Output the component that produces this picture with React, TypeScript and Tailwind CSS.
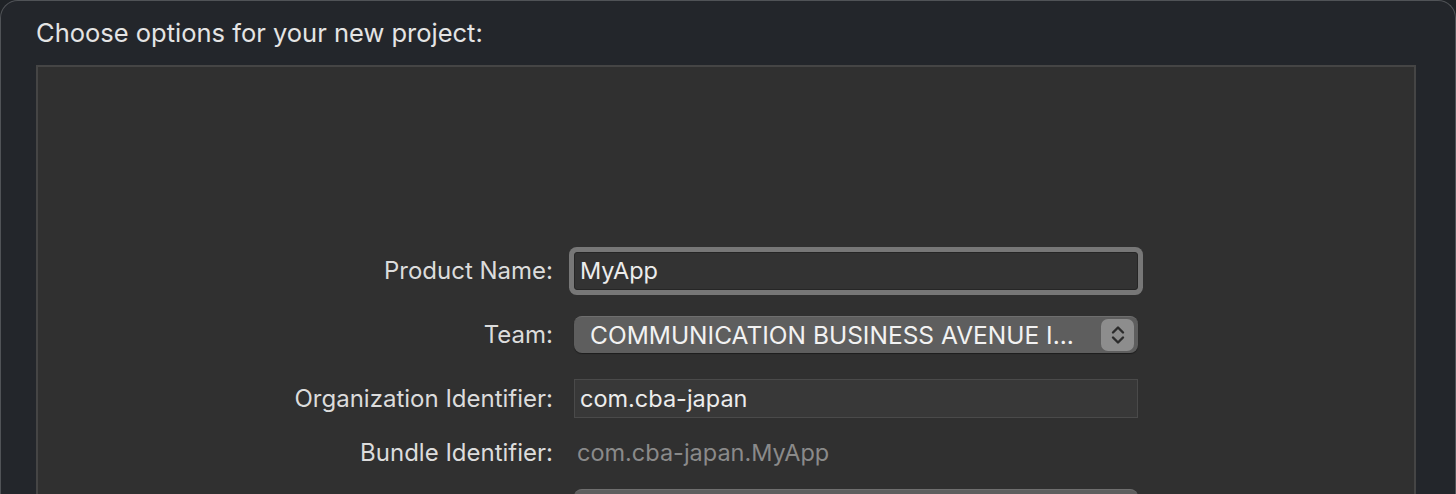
import { ReactNode } from "react";

const font = { fontFamily: "Inter, 'Noto Sans', sans-serif" };

function Row({ label, children, className }: { label: string; children: ReactNode; className?: string }) {
  return (
    <div className={`flex items-center ${className ?? ""}`}>
      <div className="w-[536px] shrink-0 pr-[21px] text-right text-[24px] text-[#dcdcdc]">{label}</div>
      <div className="w-[564px] shrink-0">{children}</div>
    </div>
  );
}

// up/down chevrons on the popup button
function Stepper() {
  return (
    <div className="flex h-[32px] w-[33px] items-center justify-center rounded-[7px] bg-[#8d8d8d]">
      <svg width="16" height="24" viewBox="0 0 16 24" fill="none" stroke="#2b2b2b" strokeWidth="2.4" strokeLinecap="round" strokeLinejoin="round">
        <path d="M3 9.5 8 4.5l5 5" />
        <path d="M3 14.5l5 5 5-5" />
      </svg>
    </div>
  );
}

export default function App() {
  return (
    <div className="h-[494px] w-[1456px] overflow-hidden bg-[#1f2226]" style={font}>
      <div className="h-[520px] rounded-t-[18px] border-x border-t border-[#505357] bg-[#23262b] pl-[35px] pr-[39px] pt-[16px]">
        <div className="text-[25.5px] leading-[32px] text-[#e4e4e4]">Choose options for your new project:</div>
        <div className="mt-[16px] h-[460px] border-2 border-[#454545] bg-[#303030] pt-[185px]">
          <Row label="Product Name:">
            <div className="flex h-[38px] items-center rounded-[3px] border border-[#262626] bg-[#333333] px-[5px] text-[23.5px] text-[#ececec] shadow-[0_0_0_5px_#777777]">
              MyApp
            </div>
          </Row>
          <Row label="Team:" className="mt-[26px]">
            <div className="flex h-[37px] items-center justify-between rounded-[8px] border-t border-[#6e6e6e] bg-[#5e5e5e] pl-[16px] pr-[4px] shadow-[0_1px_1px_rgba(0,0,0,0.4)]">
              <span className="text-[24.5px] text-[#f2f2f2]">COMMUNICATION BUSINESS AVENUE I...</span>
              <Stepper />
            </div>
          </Row>
          <Row label="Organization Identifier:" className="mt-[26px]">
            <div className="flex h-[39px] items-center border border-[#4a4a4a] bg-[#383838] px-[5px] text-[23.5px] text-[#ececec]">
              com.cba-japan
            </div>
          </Row>
          <Row label="Bundle Identifier:" className="mt-[16px]">
            <div className="flex h-[38px] items-center px-[3px] text-[23.5px] text-[#8a8a8a]">com.cba-japan.MyApp</div>
          </Row>
          <Row label="" className="mt-[17px]">
            <div className="h-[37px] rounded-[8px] border-t border-[#6e6e6e] bg-[#5e5e5e]" />
          </Row>
        </div>
      </div>
    </div>
  );
}
